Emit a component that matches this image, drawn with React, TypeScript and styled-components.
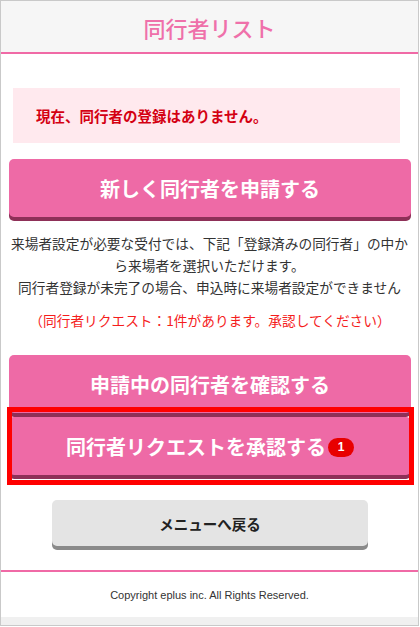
import React from "react";
import styled, { createGlobalStyle } from "styled-components";

const Global = createGlobalStyle`
  html, body { margin: 0; padding: 0; background: #fff; }
  body { font-family: "Noto Sans CJK JP", "Noto Sans", sans-serif; }
  * { box-sizing: border-box; }
`;

const Page = styled.div`
  width: 419px;
  height: 626px;
  border: 1px solid #c9c9c9;
  display: flex;
  flex-direction: column;
  background: #fff;
  overflow: hidden;
`;

const Header = styled.header`
  height: 53px;
  background: #f6f6f6;
  border-bottom: 2px solid #f06aa6;
  display: flex;
  align-items: center;
  justify-content: center;
`;

const Title = styled.h1`
  margin: 0;
  font-size: 22px;
  font-weight: 500;
  color: #ef70aa;
  line-height: 1;
`;

const Main = styled.main`
  display: flex;
  flex-direction: column;
  align-items: stretch;
  padding: 34px 7px 20px 8px;
`;

const Notice = styled.div`
  margin: 0 11px 0 4px;
  height: 55px;
  background: #ffe9ee;
  display: flex;
  align-items: center;
  padding-left: 23px;
  color: #d40012;
  font-size: 14.5px;
  font-weight: 700;
`;

const PinkButton = styled.button<{ $top?: number }>`
  margin-top: ${(p) => p.$top ?? 0}px;
  height: 58px;
  width: 100%;
  border: none;
  border-radius: 5px;
  background: #ee6aa6;
  box-shadow: 0 4px 0 #8e3058;
  margin-bottom: 4px;
  color: #fff;
  font-family: inherit;
  font-size: 20px;
  font-weight: 700;
  display: flex;
  align-items: center;
  justify-content: center;
  gap: 2px;
  padding: 0;
  cursor: pointer;
`;

const Description = styled.p`
  margin: 11px -4px 0 -5px;
  font-size: 13.7px;
  line-height: 22px;
  color: #333;
  text-align: center;
`;

const RequestNote = styled.p`
  margin: 11px -4px 0;
  font-size: 13.7px;
  line-height: 22px;
  color: #f51d1d;
  text-align: center;
`;

const Highlight = styled.div`
  position: relative;
  &::after {
    content: "";
    position: absolute;
    top: -10px;
    bottom: -6px;
    left: -2px;
    right: -3px;
    border: 5px solid #ff0000;
    pointer-events: none;
  }
`;

const Badge = styled.span`
  display: inline-flex;
  align-items: center;
  justify-content: center;
  width: 26px;
  height: 19px;
  border-radius: 10px;
  background: #e80000;
  color: #fff;
  font-family: "Liberation Sans", Arial, sans-serif;
  font-size: 12px;
  font-weight: 700;
  margin-top: 2px;
`;

const BackButton = styled.button`
  align-self: center;
  margin: 21px 0 4px 0;
  width: 316px;
  height: 46px;
  border: none;
  border-radius: 5px;
  background: #e4e4e4;
  box-shadow: 0 4px 0 #8a8a8a;
  color: #222;
  font-family: inherit;
  font-size: 14.5px;
  font-weight: 700;
  cursor: pointer;
`;

const Footer = styled.footer`
  border-top: 2px solid #f06aa6;
  flex: 1;
  display: flex;
  flex-direction: column;
`;

const Copyright = styled.div`
  height: 45px;
  display: flex;
  align-items: center;
  justify-content: center;
  font-family: "Liberation Sans", Arial, sans-serif;
  font-size: 11px;
  color: #333;
`;

const BottomStrip = styled.div`
  flex: 1;
  background: #f0f0f0;
`;

export default function App() {
  return (
    <>
      <Global />
      <Page>
        <Header>
          <Title>同行者リスト</Title>
        </Header>
        <Main>
          <Notice>現在、同行者の登録はありません。</Notice>
          <PinkButton $top={16}>新しく同行者を申請する</PinkButton>
          <Description>
            来場者設定が必要な受付では、下記「登録済みの同行者」の中か
            <br />
            ら来場者を選択いただけます。
            <br />
            同行者登録が未完了の場合、申込時に来場者設定ができません
          </Description>
          <RequestNote>（同行者リクエスト：1件があります。承認してください）</RequestNote>
          <PinkButton $top={24}>申請中の同行者を確認する</PinkButton>
          <Highlight>
            <PinkButton>
              同行者リクエストを承認する<Badge>1</Badge>
            </PinkButton>
          </Highlight>
          <BackButton>メニューへ戻る</BackButton>
        </Main>
        <Footer>
          <Copyright>Copyright eplus inc. All Rights Reserved.</Copyright>
          <BottomStrip />
        </Footer>
      </Page>
    </>
  );
}
